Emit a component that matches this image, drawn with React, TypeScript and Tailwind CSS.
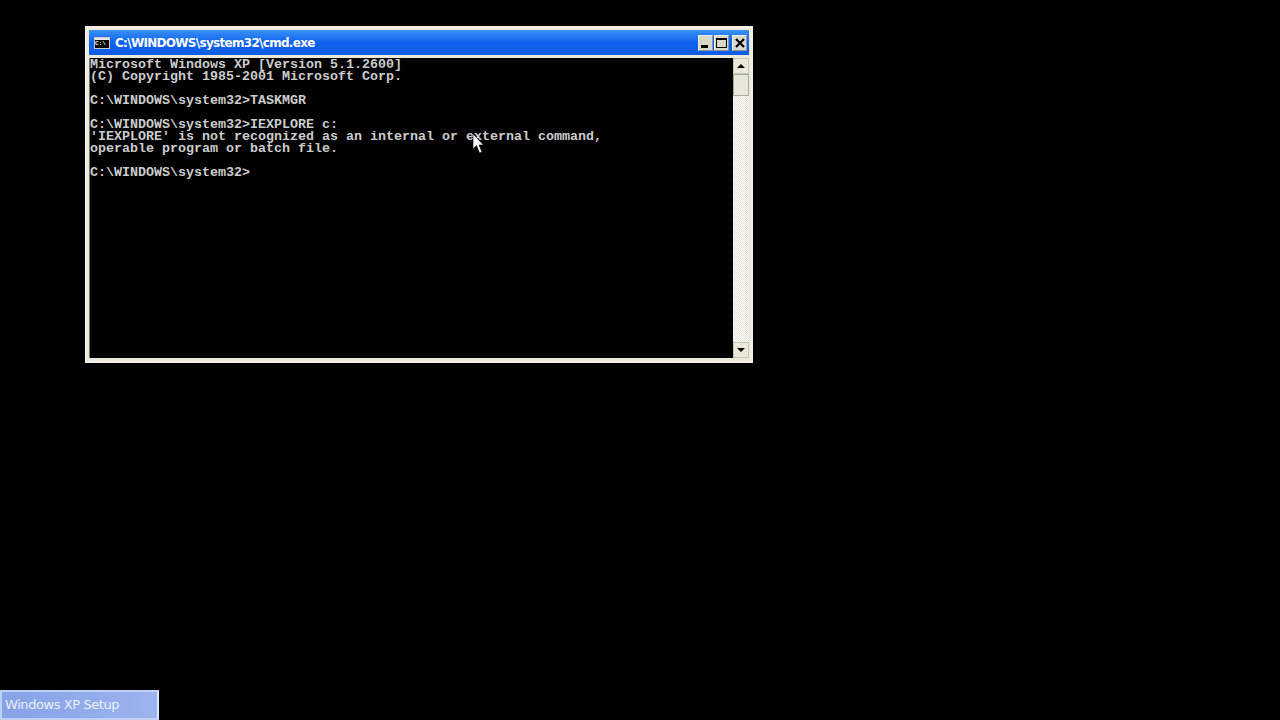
const lines = [
  "Microsoft Windows XP [Version 5.1.2600]",
  "(C) Copyright 1985-2001 Microsoft Corp.",
  "",
  "C:\\WINDOWS\\system32>TASKMGR",
  "",
  "C:\\WINDOWS\\system32>IEXPLORE c:",
  "'IEXPLORE' is not recognized as an internal or external command,",
  "operable program or batch file.",
  "",
  "C:\\WINDOWS\\system32>",
];

const CmdIcon = () => (
  <div className="w-[16px] h-[12px] bg-[#c8c8c8] flex flex-col p-px shrink-0">
    <div className="h-[2px] bg-[#e8e8e8]" />
    <div className="flex-1 bg-black text-[6px] leading-[8px] text-white font-['Liberation_Mono',monospace] font-bold overflow-hidden">
      C:\
    </div>
  </div>
);

const TitleButton = ({ children }: { children: React.ReactNode }) => (
  <div className="w-[15px] h-[16px] flex items-center justify-center bg-[#d8d8c8] border border-[#eeeee2] border-r-[#8c96a8] border-b-[#8c96a8]">
    {children}
  </div>
);

export default function App() {
  return (
    <div className="h-screen w-full bg-black flex flex-col justify-between overflow-hidden relative">
      <div className="pl-[85px] pt-[26px]">
        <div className="w-[668px] h-[337px] bg-[#ece9d8] border-2 border-[#f2f0e6] p-[2px] flex flex-col">
          {/* Title bar */}
          <div className="h-[25px] bg-gradient-to-b from-[#3a90f4] via-[#0f62ee] to-[#0d5ce4] flex items-center pl-[5px] pr-[2px] shrink-0">
            <CmdIcon />
            <span className="ml-[5px] text-white text-[12px] font-bold font-['DejaVu_Sans',sans-serif] tracking-[-0.7px] flex-1">
              C:\WINDOWS\system32\cmd.exe
            </span>
            <TitleButton>
              <div className="w-[7px] h-[3px] bg-black mt-[8px] mr-[3px]" />
            </TitleButton>
            <div className="ml-[1px] mr-[3px]">
              <TitleButton>
                <div className="w-[11px] h-[10px] border border-black border-t-2" />
              </TitleButton>
            </div>
            <TitleButton>
              <svg width="10" height="10" viewBox="0 0 10 10">
                <path d="M1 1 L9 9 M9 1 L1 9" stroke="#000" strokeWidth="2.2" />
              </svg>
            </TitleButton>
          </div>
          {/* Console and scrollbar */}
          <div className="flex-1 flex mt-[3px] mb-px min-h-0">
            <div className="flex-1 bg-black border-l border-[#77776e] pt-px font-['Liberation_Mono',monospace] text-[13.33px] leading-[12px] text-[#cccccc] whitespace-pre font-bold">
              {lines.map((line, i) => (
                <div key={i} className="h-[12px]">
                  {line}
                </div>
              ))}
            </div>
            <div className="w-[16px] bg-[repeating-conic-gradient(#e4e2d4_0_25%,#ffffff_0_50%)] bg-[length:2px_2px] flex flex-col justify-between">
              <div>
                <div className="h-[16px] bg-[#ece9d8] border border-[#c8c8bc] flex items-center justify-center">
                  <div className="w-0 h-0 border-x-[4px] border-x-transparent border-b-[4px] border-b-black" />
                </div>
                <div className="h-[22px] bg-[#e8e8da] border border-[#aaaaa0]" />
              </div>
              <div className="h-[16px] bg-[#ece9d8] border border-[#c8c8bc] flex items-center justify-center">
                <div className="w-0 h-0 border-x-[4px] border-x-transparent border-t-[4px] border-t-black" />
              </div>
            </div>
          </div>
        </div>
      </div>

      {/* Taskbar button */}
      <div className="w-[159px] h-[30px] bg-gradient-to-r from-[#86a2e8] to-[#9cb4ee] border-2 border-[#c0cff4] border-r-[#dfe6f8] flex items-center pl-[3px]">
        <span className="text-[#e8eefc] text-[13px] font-['DejaVu_Sans',sans-serif] tracking-[-0.42px]">
          Windows XP Setup
        </span>
      </div>

      {/* Mouse pointer */}
      <svg className="absolute left-[472px] top-[133px]" width="12" height="22" viewBox="0 0 12 22">
        <path d="M1 1 L1 16 L4.5 12.5 L7.5 20 L10 19 L7 12 L11.5 12 Z" fill="#fff" stroke="#000" strokeWidth="0.6" />
      </svg>
    </div>
  );
}
